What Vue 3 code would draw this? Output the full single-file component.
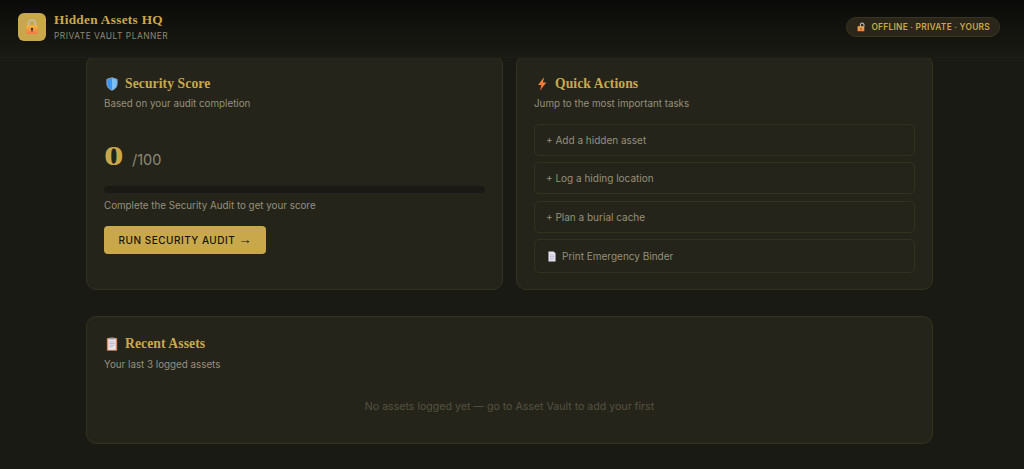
<script setup>
const actions = [
  { label: '+ Add a hidden asset' },
  { label: '+ Log a hiding location' },
  { label: '+ Plan a burial cache' },
  { label: 'Print Emergency Binder', doc: true }
]
</script>

<template>
  <div class="page">
    <header class="topbar">
      <div class="brand">
        <div class="logo">
          <svg class="lock-big" viewBox="0 0 16 18">
            <path d="M4 8V5.5a4 4 0 0 1 8 0V8" fill="none" stroke="#c4bfb2" stroke-width="1.8" />
            <rect x="1.5" y="7.5" width="13" height="10" rx="1.2" fill="url(#lockGrad)" />
            <circle cx="8" cy="11.6" r="1.3" fill="#3a2a20" />
            <rect x="7.4" y="11.8" width="1.2" height="3.2" fill="#3a2a20" />
            <defs>
              <linearGradient id="lockGrad" x1="0" y1="0" x2="0" y2="1">
                <stop offset="0" stop-color="#f5b83f" />
                <stop offset="1" stop-color="#f4794a" />
              </linearGradient>
            </defs>
          </svg>
        </div>
        <div class="brand-text">
          <div class="brand-name">Hidden Assets HQ</div>
          <div class="brand-sub">PRIVATE VAULT PLANNER</div>
        </div>
      </div>
      <div class="pill">
        <svg class="lock-small" viewBox="0 0 16 16">
          <path d="M6 7V4.2a3.2 3.2 0 0 1 6.4 0V7" fill="none" stroke="#b7b4c4" stroke-width="2" />
          <rect x="1" y="6.5" width="12" height="9" rx="1" fill="url(#lockGrad)" />
          <rect x="6.2" y="9.5" width="1.6" height="3" fill="#3a2a20" />
        </svg>
        <span>OFFLINE · PRIVATE · YOURS</span>
      </div>
    </header>

    <main class="content">
      <div class="two-col">
        <section class="card">
          <h2 class="card-title">
            <svg class="ico" viewBox="0 0 14 16">
              <path d="M7 .6 13 2.6V8c0 3.6-2.6 6-6 7.4C3.6 14 1 11.6 1 8V2.6Z" fill="#3f96f2" stroke="#9aa6b4" stroke-width="1" />
              <path d="M7 1.2V15C10 13.6 12.4 11.4 12.4 8V3Z" fill="#7cc0fa" />
            </svg>
            <span>Security Score</span>
          </h2>
          <p class="card-sub">Based on your audit completion</p>
          <div class="score-row">
            <span class="score">0</span>
            <span class="score-max">/100</span>
          </div>
          <div class="track"></div>
          <p class="hint">Complete the Security Audit to get your score</p>
          <button class="cta">RUN SECURITY AUDIT <span class="arrow">→</span></button>
        </section>

        <section class="card">
          <h2 class="card-title">
            <svg class="ico" viewBox="0 0 14 16">
              <defs>
                <linearGradient id="boltGrad" x1="0" y1="0" x2="0" y2="1">
                  <stop offset="0" stop-color="#f9a13a" />
                  <stop offset="1" stop-color="#ee5a3c" />
                </linearGradient>
              </defs>
              <path d="M9.4 0 2.4 9.2h3.8L4.6 16 12 6.2H8Z" fill="url(#boltGrad)" />
            </svg>
            <span>Quick Actions</span>
          </h2>
          <p class="card-sub">Jump to the most important tasks</p>
          <div class="actions">
            <button v-for="a in actions" :key="a.label" class="action" :class="{ tall: a.doc }">
              <svg v-if="a.doc" class="doc" viewBox="0 0 12 14">
                <path d="M1.5 .5H8L10.5 3V13.5H1.5Z" fill="#e6e2f0" />
                <path d="M3 5h6M3 7h6M3 9h6M3 11h4" stroke="#b6b2c8" stroke-width=".8" />
              </svg>
              <span>{{ a.label }}</span>
            </button>
          </div>
        </section>
      </div>

      <section class="card recent">
        <h2 class="card-title">
          <svg class="ico" viewBox="0 0 14 16">
            <rect x="1" y="1" width="12" height="15" rx="1" fill="#d98a5a" />
            <rect x="2.6" y="2" width="8.8" height="12.8" fill="#ece6f0" />
            <rect x="4.2" y=".4" width="5.6" height="2.4" fill="#9a9ab0" />
            <path d="M4 5.5h6M4 7.5h6M4 9.5h6M4 11.5h4" stroke="#a9a5bd" stroke-width=".8" />
          </svg>
          <span>Recent Assets</span>
        </h2>
        <p class="card-sub recent-sub">Your last 3 logged assets</p>
        <p class="empty">No assets logged yet — go to Asset Vault to add your first</p>
      </section>
    </main>
  </div>
</template>

<style>
html, body { margin: 0; background: #1a1a14; }
</style>

<style scoped>
.page {
  height: 469px;
  overflow: hidden;
  background: #1a1a14;
  font-family: Inter, "Liberation Sans", sans-serif;
  color: #a09a85;
}
.topbar {
  position: relative;
  z-index: 2;
  box-sizing: border-box;
  height: 58px;
  padding: 0 24px 4px 18px;
  display: flex;
  align-items: center;
  justify-content: space-between;
  background: linear-gradient(180deg, #0a0a08 0%, #1a1a14 100%);
  border-bottom: 1px solid #1f1f17;
}
.brand { display: flex; align-items: center; gap: 8px; }
.logo {
  width: 28px;
  height: 28px;
  border-radius: 6px;
  background: #c9a84c;
  display: flex;
  align-items: center;
  justify-content: center;
}
.lock-big { width: 14px; height: 17px; }
.brand-name {
  font-family: "Liberation Serif", serif;
  font-weight: 700;
  font-size: 13.3px;
  letter-spacing: .3px;
  line-height: 17px;
  color: #c9a84c;
}
.brand-sub {
  margin-top: 3px;
  font-size: 8.4px;
  line-height: 11px;
  letter-spacing: .5px;
  color: #8f8975;
}
.pill {
  box-sizing: border-box;
  height: 20px;
  padding: 0 9px 0 10px;
  display: flex;
  align-items: center;
  gap: 5px;
  border-radius: 10px;
  background: #2a2619;
  border: 1px solid #3a3520;
  font-size: 8.4px;
  font-weight: 600;
  letter-spacing: .25px;
  color: #c9a84c;
}
.lock-small { width: 9px; height: 10px; }
.content {
  margin-top: -3px;
  padding: 0 91px 0 86px;
  display: flex;
  flex-direction: column;
  gap: 26px;
}
.two-col {
  display: grid;
  grid-template-columns: 1fr 1fr;
  gap: 13px;
}
.card {
  box-sizing: border-box;
  height: 235px;
  padding: 19px 17px 0;
  background: #25241a;
  border: 1px solid #333220;
  border-radius: 10px;
}
.recent { height: 128px; padding-top: 18px; }
.card-title {
  margin: 0;
  display: flex;
  align-items: center;
  gap: 7px;
  height: 18px;
  font-family: "Liberation Serif", serif;
  font-weight: 700;
  font-size: 13.6px;
  letter-spacing: .1px;
  color: #c9a84c;
  padding-left: 2px;
}
.ico { width: 12px; height: 14px; flex: none; }
.card-sub {
  margin: 4px 0 0;
  font-size: 9.8px;
  line-height: 14px;
  color: #96907b;
}
.recent-sub { margin-top: 5px; }
.score-row {
  margin-top: 29px;
  height: 32px;
  display: flex;
  align-items: baseline;
}
.score {
  display: inline-block;
  width: 22px;
  font-family: "Liberation Serif", serif;
  font-weight: 700;
  font-size: 27px;
  line-height: 32px;
  color: #c9a84c;
  transform: scaleX(1.45);
  transform-origin: left;
}
.score-max { margin-left: 6px; font-size: 14.5px; color: #8f8975; }
.track {
  margin-top: 14px;
  height: 7px;
  border-radius: 4px;
  background: #1a1a14;
}
.hint {
  margin: 6px 0 0;
  font-size: 9.8px;
  line-height: 14px;
  color: #96907b;
}
.cta {
  display: block;
  margin-top: 13px;
  width: 162px;
  height: 28px;
  border: none;
  border-radius: 4px;
  background: #c9a84c;
  color: #14140e;
  font-family: Inter, "Liberation Sans", sans-serif;
  font-size: 10px;
  font-weight: 500;
  letter-spacing: .5px;
}
.arrow {
  font-family: "Liberation Serif", serif;
  font-size: 13px;
  letter-spacing: 0;
  line-height: 10px;
}
.actions {
  margin-top: 13px;
  display: flex;
  flex-direction: column;
  gap: 6.4px;
}
.action {
  box-sizing: border-box;
  height: 32px;
  padding: 0 11px;
  display: flex;
  align-items: center;
  gap: 5px;
  background: transparent;
  border: 1px solid #333220;
  border-radius: 5px;
  color: #96907b;
  font-family: Inter, "Liberation Sans", sans-serif;
  font-size: 10px;
  text-align: left;
}
.action.tall { height: 34px; }
.doc { width: 10px; height: 11px; flex: none; margin-left: 1px; }
.empty {
  margin: 28px 0 0;
  text-align: center;
  font-size: 10.6px;
  line-height: 14px;
  color: #55523f;
}
</style>
